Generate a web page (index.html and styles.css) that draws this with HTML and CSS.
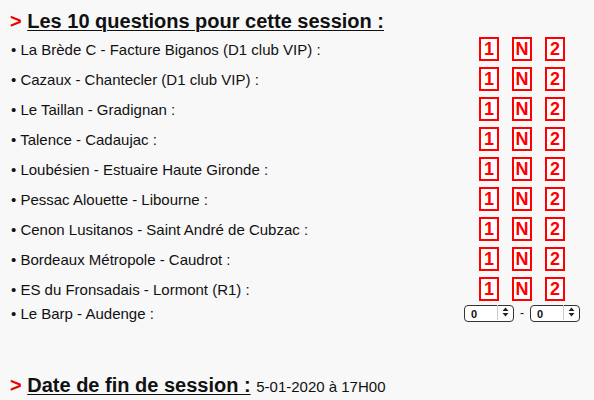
FILE: index.html
```html
<!DOCTYPE html>
<html lang="fr">
<head>
  <meta charset="UTF-8" />
  <title>Pronostics</title>
  <link rel="stylesheet" href="styles.css">
</head>
<body>
  <h2 class="title"><span class="arrow">&gt;</span> <u>Les 10 questions pour cette session :</u></h2>

  <div class="matches">
    <div class="match">• La Brède C - Facture Biganos (D1 club VIP) :</div>
    <div class="picks"><span class="pick">1</span><span class="pick">N</span><span class="pick">2</span></div>

    <div class="match">• Cazaux - Chantecler (D1 club VIP) :</div>
    <div class="picks"><span class="pick">1</span><span class="pick">N</span><span class="pick">2</span></div>

    <div class="match">• Le Taillan - Gradignan :</div>
    <div class="picks"><span class="pick">1</span><span class="pick">N</span><span class="pick">2</span></div>

    <div class="match">• Talence - Cadaujac :</div>
    <div class="picks"><span class="pick">1</span><span class="pick">N</span><span class="pick">2</span></div>

    <div class="match">• Loubésien - Estuaire Haute Gironde :</div>
    <div class="picks"><span class="pick">1</span><span class="pick">N</span><span class="pick">2</span></div>

    <div class="match">• Pessac Alouette - Libourne :</div>
    <div class="picks"><span class="pick">1</span><span class="pick">N</span><span class="pick">2</span></div>

    <div class="match">• Cenon Lusitanos - Saint André de Cubzac :</div>
    <div class="picks"><span class="pick">1</span><span class="pick">N</span><span class="pick">2</span></div>

    <div class="match">• Bordeaux Métropole - Caudrot :</div>
    <div class="picks"><span class="pick">1</span><span class="pick">N</span><span class="pick">2</span></div>

    <div class="match">• ES du Fronsadais - Lormont (R1) :</div>
    <div class="picks"><span class="pick">1</span><span class="pick">N</span><span class="pick">2</span></div>

    <div class="match short">• Le Barp - Audenge :</div>
    <div class="score short">
      <span class="sel"><select><option>0</option><option>1</option><option>2</option></select><span class="spin"><svg width="7" height="10" viewBox="0 0 7 10"><path d="M3.5 0.5 L6.5 4 H0.5 Z M3.5 9.5 L6.5 6 H0.5 Z" fill="#222"/></svg></span></span>
      <span class="dash">-</span>
      <span class="sel"><select><option>0</option><option>1</option><option>2</option></select><span class="spin"><svg width="7" height="10" viewBox="0 0 7 10"><path d="M3.5 0.5 L6.5 4 H0.5 Z M3.5 9.5 L6.5 6 H0.5 Z" fill="#222"/></svg></span></span>
    </div>
  </div>

  <h2 class="title end"><span class="arrow">&gt;</span> <u>Date de fin de session :</u> <span class="date">5-01-2020 à 17H00</span></h2>
</body>
</html>
```

FILE: styles.css
```css
body {
  margin: 0;
  padding: 8px 8px 0 10px;
  background-color: #f8f8f8;
  color: #111;
  font-family: "Liberation Sans", Arial, sans-serif;
  font-size: 15px;
}

.title {
  margin: 0;
  height: 26px;
  font-size: 20px;
  font-weight: bold;
  line-height: 26px;
}

.title u {
  text-decoration-thickness: 1px;
  text-underline-offset: 2px;
}

.arrow {
  color: #e00;
}

.matches {
  display: grid;
  grid-template-columns: 1fr 128px;
  grid-auto-rows: 30px;
}

.match {
  display: flex;
  align-items: center;
  padding-left: 1px;
}

.picks {
  display: flex;
  justify-content: center;
  align-items: center;
  gap: 13px;
}

.pick {
  width: 16px;
  height: 20px;
  border: 2px solid #f00;
  box-shadow: inset 0 0 0 1px #fff;
  background: #fff;
  color: #f00;
  font-weight: bold;
  font-size: 18px;
  line-height: 20px;
  text-align: center;
}

.short {
  height: 18px;
}

.score {
  display: flex;
  justify-content: center;
  align-items: center;
  gap: 6px;
}

.sel {
  position: relative;
  display: inline-block;
}

.sel select {
  appearance: none;
  width: 50px;
  height: 17px;
  margin: 0;
  padding: 0 0 0 6px;
  border: 1px solid #333;
  border-radius: 4px;
  background: #fff;
  font-family: "Liberation Sans", Arial, sans-serif;
  font-size: 11px;
  font-weight: bold;
  color: #111;
}

.spin {
  position: absolute;
  top: 1px;
  right: 1px;
  width: 15px;
  height: 15px;
  border-left: 1px solid #ccc;
  border-radius: 0 3px 3px 0;
  display: flex;
  align-items: center;
  justify-content: center;
  pointer-events: none;
}

.dash {
  font-size: 12px;
}

.end {
  margin-top: 38px;
}

.date {
  font-size: 15px;
  font-weight: normal;
}
```
